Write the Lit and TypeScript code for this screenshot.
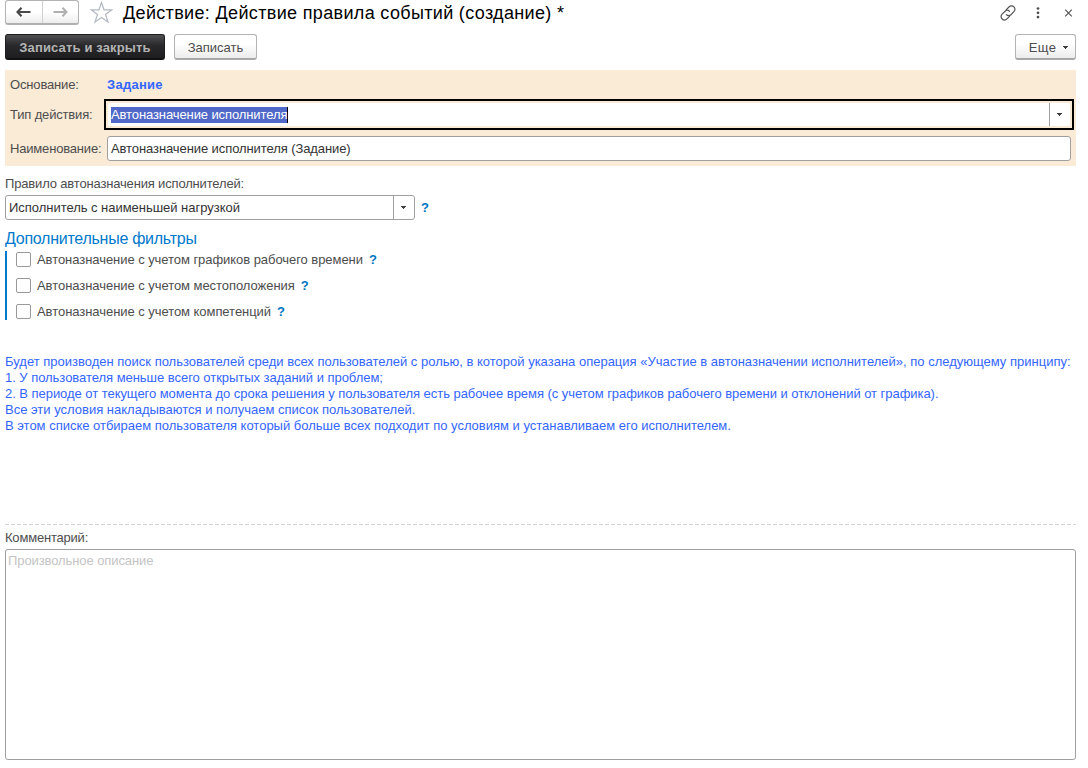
import { LitElement, html, css } from "lit";
import { customElement } from "lit/decorators.js";

const caret = () => html`<svg width="5" height="3" viewBox="0 0 5 3" shape-rendering="crispEdges">
  <path d="M0 0H5V1H4V2H3V3H2V2H1V1H0Z" fill="#404040" />
</svg>`;

const filters = [
  { cls: "f1", text: "Автоназначение с учетом графиков рабочего времени" },
  { cls: "f2", text: "Автоназначение с учетом местоположения" },
  { cls: "f3", text: "Автоназначение с учетом компетенций" },
];

const hints = [
  "Будет производен поиск пользователей среди всех пользователей с ролью, в которой указана операция «Участие в автоназначении исполнителей», по следующему принципу:",
  "1. У пользователя меньше всего открытых заданий и проблем;",
  "2. В периоде от текущего момента до срока решения у пользователя есть рабочее время (с учетом графиков рабочего времени и отклонений от графика).",
  "Все эти условия накладываются и получаем список пользователей.",
  "В этом списке отбираем пользователя который больше всех подходит по условиям и устанавливаем его исполнителем.",
];

@customElement("app-root")
export class AppRoot extends LitElement {
  static styles = css`
    :host {
      display: flex;
      flex-direction: column;
      box-sizing: border-box;
      width: 1088px;
      height: 768px;
      padding: 0 12px 8px 5px;
      overflow: hidden;
      background: #fff;
      color: #4d4d4d;
      font: 13px/16px "Liberation Sans", Arial, sans-serif;
      white-space: nowrap;
    }
    * { box-sizing: border-box; }
    svg { display: block; flex: none; }
    .header { display: flex; height: 25px; align-items: center; flex: none; }
    .nav {
      display: flex;
      width: 74px;
      height: 25px;
      border: 1px solid #b3b3b3;
      border-bottom: 2px solid #b0b0b0;
      border-radius: 3px;
      background: linear-gradient(#fff 50%, #ededed);
    }
    .nav span { flex: 1; display: flex; align-items: center; justify-content: center; }
    .nav span + span { border-left: 1px solid #d0d0d0; }
    .star { margin-left: 11px; }
    .title { margin-left: 10px; color: #000; font-size: 18px; line-height: 24px; letter-spacing: 0.34px; }
    .tools { display: flex; margin-left: auto; align-items: center; height: 24px; }
    .dots { margin-left: 20px; }
    .close { margin-left: 24px; margin-right: 3px; }
    .commands { display: flex; margin-top: 9px; height: 27px; flex: none; }
    .btn {
      display: flex;
      align-items: center;
      justify-content: center;
      height: 26px;
      border: 1px solid #b3b3b3;
      border-bottom: 2px solid #a8a8a8;
      border-radius: 3px;
      background: linear-gradient(#fff 40%, #ececec);
      padding-top: 2px;
    }
    .primary {
      width: 160px;
      border: 1px solid #1c1c1e;
      border-bottom: 2px solid #111;
      background: linear-gradient(#505052, #29292b 45%, #1e1e20);
      color: #b4b4b4;
      font-weight: bold;
      letter-spacing: 0.14px;
    }
    .save { width: 83px; margin-left: 9px; letter-spacing: 0.02px; }
    .more { width: 61px; margin-left: auto; gap: 7px; padding-left: 6px; letter-spacing: 0.4px; }
    .panel {
      display: grid;
      grid-template-columns: 94px 1fr;
      grid-template-rows: 29px 31px 35px;
      height: 96px;
      margin-top: 9px;
      padding-left: 5px;
      flex: none;
      background: #faebd7;
      align-items: center;
    }
    .panel label { letter-spacing: -0.16px; }
    .panel .name-label { letter-spacing: -0.18px; padding-top: 2px; }
    .link { color: #3366ff; font-weight: bold; margin-left: 3px; letter-spacing: 0.27px; }
    .focus {
      display: flex;
      height: 31px;
      margin-right: 2px;
      padding: 2px;
      border: 2px solid #000;
    }
    .inner {
      display: flex;
      flex: 1;
      background: #fff;
      border-radius: 2px;
      align-items: center;
      padding-left: 3px;
      height: 23px;
    }
    .sel { background: #5068c8; color: #fff; border-right: 1px solid #000; letter-spacing: -0.1px; }
    .drop {
      display: flex;
      align-self: stretch;
      width: 21px;
      margin-left: auto;
      padding-right: 1px;
      padding-bottom: 1px;
      border-left: 1px solid #a0a0a0;
      align-items: center;
      justify-content: center;
    }
    .field {
      display: flex;
      align-items: center;
      height: 25px;
      border: 1px solid #a0a0a0;
      border-radius: 3px;
      background: #fff;
      color: #333;
      padding-left: 3px;
    }
    .name { margin: 1px 5px 0 3px; padding-top: 1px; letter-spacing: -0.09px; }
    .rule-label { margin-top: 10px; letter-spacing: -0.165px; }
    .rule { display: flex; align-items: center; margin-top: 3px; gap: 6px; }
    .rule .field { width: 410px; letter-spacing: -0.03px; }
    .q { color: #0075c2; font-weight: bold; }
    .group { margin-top: 9px; font-size: 16px; line-height: 20px; color: #0079cc; letter-spacing: -0.26px; }
    .filters {
      display: flex;
      flex-direction: column;
      gap: 10px;
      margin-top: 2px;
      height: 69px;
      padding-left: 9px;
      border-left: 2px solid #0079cc;
      flex: none;
    }
    .filter { display: flex; align-items: flex-start; height: 16px; line-height: 18px; }
    .box { width: 15px; height: 15px; margin-top: 1px; border: 1px solid #999; border-radius: 2px; margin-right: 6px; }
    .filter .q { margin-left: 6px; }
    .f1 { letter-spacing: -0.055px; }
    .f2, .f3 { letter-spacing: -0.05px; }
    .hints { margin-top: 34px; color: #3366ff; height: 80px; }
    .h1 { letter-spacing: -0.035px; }
    .h2 { letter-spacing: -0.044px; }
    .h4 { letter-spacing: -0.01px; }
    .separator {
      height: 1px;
      margin-top: 90px;
      flex: none;
      background: repeating-linear-gradient(90deg, #d3d3d3 0 4px, transparent 4px 6px);
    }
    .comment-label { margin-top: 5px; letter-spacing: -0.2px; }
    .comment {
      flex: 1;
      margin-top: 3px;
      border: 1px solid #a0a0a0;
      border-radius: 3px;
      padding: 3px 2px;
      color: #c4c4c4;
      letter-spacing: -0.09px;
    }
  `;

  render() {
    return html`
      <div class="header">
        <div class="nav">
          <span><svg width="15" height="10" viewBox="0 0 15 10"><path d="M5.5 0.8L1.5 5L5.5 9.2M1.5 5H14.5" fill="none" stroke="#4a4a4a" stroke-width="2.2" /></svg></span>
          <span><svg width="15" height="10" viewBox="0 0 15 10"><path d="M9.5 0.8L13.5 5L9.5 9.2M13.5 5H0.5" fill="none" stroke="#b0b0b0" stroke-width="2" /></svg></span>
        </div>
        <svg class="star" width="23" height="23" viewBox="0 0 23 23"><path d="M11.5 1.5L14 8.8H21.8L15.5 13.4L18 21L11.5 16.4L5 21L7.5 13.4L1.2 8.8H9Z" fill="none" stroke="#b3bac2" stroke-width="1.2" /></svg>
        <div class="title">Действие: Действие правила событий (создание) *</div>
        <div class="tools">
          <svg width="16" height="16" viewBox="0 0 16 16"><g fill="none" stroke="#555" stroke-width="1.2" stroke-linecap="round"><path d="M6.3 4.7L9 2C10.5 .5 12.5 .5 13.9 1.9S15.3 5.3 13.9 6.7L10.9 9.700C9.5 11 7.6 10.9 6.4 9.6" /><path d="M9.500 11.3L7 13.9C5.500 15.4 3.5 15.4 2.1 14S.7 10.6 2.1 9.2L5.1 6.3C6.5 5 8.3 5.1 9.5 6.3" /></g></svg>
          <svg class="dots" width="4" height="12" viewBox="0 0 4 12"><g fill="#4d4d4d"><circle cx="2" cy="1.5" r="1.35" /><circle cx="2" cy="5.8" r="1.35" /><circle cx="2" cy="10.1" r="1.35" /></g></svg>
          <svg class="close" width="9" height="8" viewBox="0 0 9 8"><path d="M1.2 .7L7.8 7.3M7.8 .7L1.2 7.3" stroke="#555" stroke-width="1.2" /></svg>
        </div>
      </div>

      <div class="commands">
        <div class="btn primary">Записать и закрыть</div>
        <div class="btn save">Записать</div>
        <div class="btn more">Еще ${caret()}</div>
      </div>

      <div class="panel">
        <label>Основание:</label>
        <span class="link">Задание</span>
        <label>Тип действия:</label>
        <div class="focus">
          <div class="inner"><span class="sel">Автоназначение исполнителя</span><span class="drop">${caret()}</span></div>
        </div>
        <label class="name-label">Наименование:</label>
        <div class="field name">Автоназначение исполнителя (Задание)</div>
      </div>

      <div class="rule-label">Правило автоназначения исполнителей:</div>
      <div class="rule">
        <div class="field">Исполнитель с наименьшей нагрузкой<span class="drop">${caret()}</span></div>
        <span class="q">?</span>
      </div>

      <div class="group">Дополнительные фильтры</div>
      <div class="filters">
        ${filters.map((f) => html`<div class="filter"><span class="box"></span><span class=${f.cls}>${f.text}</span><span class="q">?</span></div>`)}
      </div>

      <div class="hints">${hints.map((t, i) => html`<div class="h${i}">${t}</div>`)}</div>

      <div class="separator"></div>
      <div class="comment-label">Комментарий:</div>
      <div class="comment">Произвольное описание</div>
    `;
  }
}
